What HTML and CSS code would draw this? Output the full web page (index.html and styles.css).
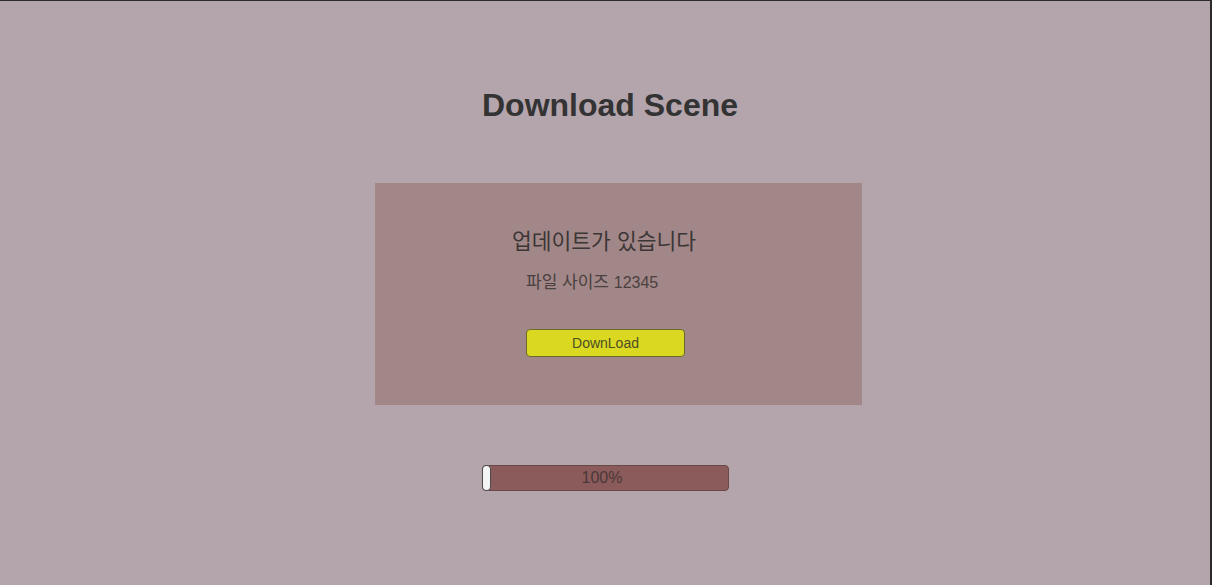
FILE: index.html
```html
<!DOCTYPE html>
<html lang="ko">
<head>
<meta charset="utf-8">
<link rel="stylesheet" href="styles.css">
<title>Download Scene</title>
</head>
<body>
<div class="frame">
  <h1 class="title">Download Scene</h1>
  <section class="panel">
    <p class="notice">업데이트가 있습니다</p>
    <p class="size">파일 사이즈 <span class="num">12345</span></p>
    <button class="download">DownLoad</button>
  </section>
  <div class="progress">
    <div class="handle"></div>
    <span class="pct">100%</span>
  </div>
</div>
</body>
</html>
```
FILE: styles.css
```css
html, body {
  margin: 0;
  padding: 0;
  background: #b4a5ad;
}
.frame {
  box-sizing: border-box;
  width: 1212px;
  height: 585px;
  border-top: 1px solid #2b2b2b;
  border-right: 2px solid #2b2b2b;
  background: #b4a5ad;
  display: flex;
  flex-direction: column;
  font-family: "Liberation Sans", "Noto Sans CJK KR", sans-serif;
  overflow: hidden;
}
.title {
  margin: 86px 0 0 482px;
  font-size: 32px;
  line-height: 37px;
  font-weight: bold;
  color: #333333;
}
.panel {
  margin: 59px 0 0 375px;
  width: 487px;
  height: 222px;
  background: #a28788;
  display: flex;
  flex-direction: column;
  align-items: flex-start;
  padding-left: 137px;
  box-sizing: border-box;
}
.notice {
  margin: 43px 0 0 0;
  font-family: "Noto Sans CJK KR", sans-serif;
  font-size: 21.5px;
  line-height: 28px;
  color: #3c3636;
}
.size {
  margin: 16px 0 0 14px;
  font-family: "Noto Sans CJK KR", sans-serif;
  font-size: 17px;
  line-height: 22px;
  color: #4a4040;
}
.size .num {
  font-family: "Liberation Sans", sans-serif;
  font-size: 16px;
}
.download {
  margin: 35px 0 0 14px;
  width: 159px;
  height: 28px;
  background: #dad820;
  border: 1px solid #6b6a2a;
  border-radius: 4px;
  font-family: "Liberation Sans", sans-serif;
  font-size: 14px;
  color: #4d4d28;
  padding: 0;
}
.progress {
  margin: 60px 0 0 482px;
  width: 247px;
  height: 26px;
  box-sizing: border-box;
  background: #8b5b5b;
  border: 1px solid #6a4848;
  border-radius: 4px;
  position: relative;
  display: flex;
  align-items: center;
  justify-content: center;
  padding-right: 7px;
}
.handle {
  position: absolute;
  left: -1px;
  top: -1px;
  width: 9px;
  height: 26px;
  background: #f4f4f4;
  border: 1px solid #4a4a4a;
  border-radius: 4px;
  box-sizing: border-box;
}
.pct {
  font-size: 16px;
  color: #4a3838;
}
```
